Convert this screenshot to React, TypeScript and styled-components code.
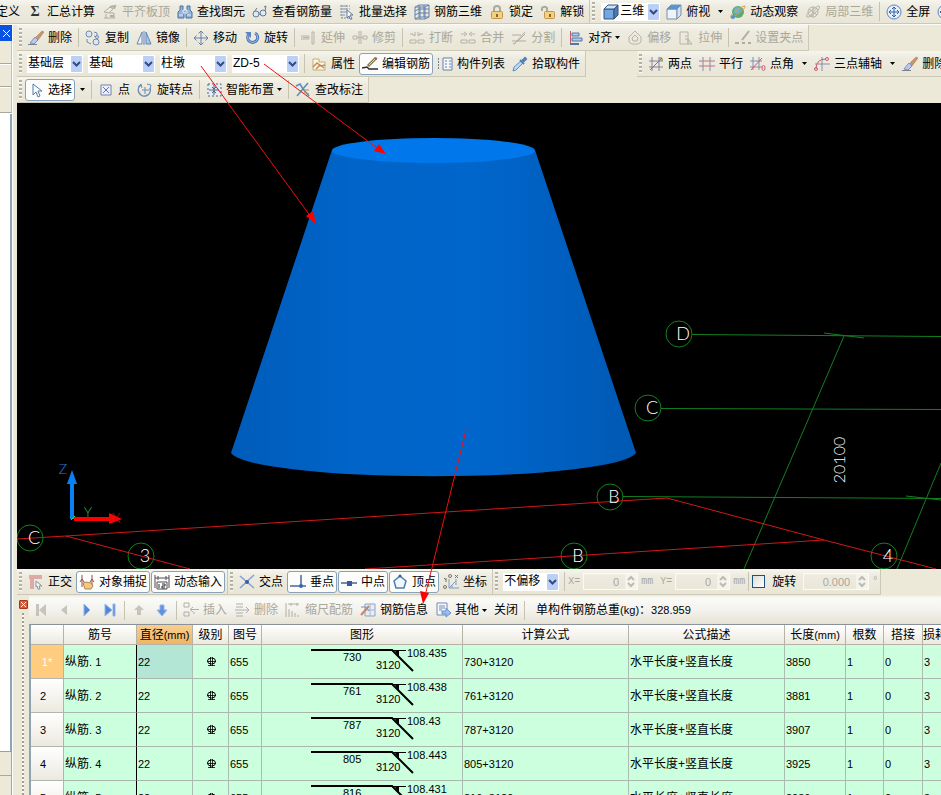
import React from "react";
import styled, { createGlobalStyle, css } from "styled-components";

const GlobalStyle = createGlobalStyle`
  * { box-sizing: border-box; }
  body { margin: 0; background: #ece9d8; overflow: hidden; }
  body, button, select, input, table {
    font-family: "Liberation Sans", "Noto Sans CJK SC", sans-serif;
    font-size: 12px;
    line-height: 16px;
    color: #000;
  }
`;

/* ---------- icons ---------- */

const I = {
  level: <g fill="none" stroke="#aaa799"><path d="M2 8l6-5 3 2-4 4zM4 10v4M2 14h11M7 9h5v5" /><path d="M8 3l5-1-1 3M8 12h4" strokeWidth="2" /></g>,
  binoc: <g fill="#86abdc" stroke="#36619c"><path d="M3 2h3v4l1 2v6H1V8l2-2zM10 2h3v4l2 2v6H9V8l1-2z" /><path d="M6 6h4v3H6zM2 11h4M10 11h4" stroke="#e1ecfa" /></g>,
  glasses: <g fill="#dce9f5" stroke="#53698a"><circle cx="4" cy="10" r="3" /><circle cx="11" cy="9" r="3" /><path d="M7 10h1M2 8l3-4M13 7l1-5-2 1" fill="none" /></g>,
  batch: <g fill="none" stroke="#6e83a8"><path d="M1 2h10M1 5h10M1 8h6M1 11h6M2 14h8M3 1v13M7 1v8" strokeDasharray="2 1" /><path d="M8 6l6 5-3 0 2 4-2 0-1-3-2 2z" fill="#fff" stroke="#506a96" /></g>,
  grid3: <g fill="none" stroke="#5273a8"><path d="M1 3l4-2v12l-4 2zM5 1h10v12H5M1 7l4-2h10M1 11l4-2h10M10 1v12M1 15h10l4-2M1 3h10l4-2M11 3v12M6 3v12" /></g>,
  lock: <g><path d="M5 8V5a3 3 0 016 0v3" fill="none" stroke="#a3a094" strokeWidth="2" /><rect x="2.5" y="7.5" width="11" height="7" rx="1" fill="#f5ce72" stroke="#be8a35" /><path d="M8 10v3" stroke="#7d5419" strokeWidth="2" /></g>,
  unlock: <g><path d="M2 7V4a3 3 0 015 0v4" fill="none" stroke="#a3a094" strokeWidth="2" /><rect x="4.5" y="7.5" width="10" height="7" rx="1" fill="#f5ce72" stroke="#be8a35" /><path d="M10 10v3" stroke="#7d5419" strokeWidth="2" /></g>,
  cube: <g stroke="#193d69" strokeLinejoin="round"><path d="M1 5h10v10H1z" fill="#5d9ddb" /><path d="M1 5l4-4h10l-4 4z" fill="#c6e1fa" /><path d="M11 5l4-4v10l-4 4z" fill="#2e6aab" /></g>,
  cubeTop: <g stroke="#6185ae" strokeLinejoin="round"><path d="M1 5h10v10H1z" fill="#eef5fc" /><path d="M1 5l4-4h10l-4 4z" fill="#428bd0" /><path d="M11 5l4-4v10l-4 4z" fill="#d2e2f2" /></g>,
  orbit: <g><circle cx="8" cy="8" r="6" fill="#46a366" /><path d="M4 5q4-4 7 0l-2 4-4 1z" fill="#55aede" /><path d="M1 14Q-1 11 7 6t8-4q1 2-6 7t-8 5z" fill="none" stroke="#dc9338" /><circle cx="3" cy="13" r="2" fill="#3a87cb" /></g>,
  orbitOff: <g fill="none" stroke="#b0ad9f"><circle cx="8" cy="8" r="5" /><path d="M4 5l8 6M5 12l7-8M2 13q-2-2 5-7t7-4q2 2-4 7t-8 4zM8 3v10" /></g>,
  zoomAll: <g fill="none" stroke="#4a78bc"><circle cx="8" cy="8" r="7" fill="#e4f0fc" /><path d="M8 3v10M3 8h10M6 5l2-2 2 2M6 11l2 2 2-2M5 6L3 8l2 2M11 6l2 2-2 2" stroke="#1d519d" /></g>,
  erase: <g><path d="M14 1l2 1-6 8-3-2z" fill="#c98a55" stroke="#8d6048" strokeWidth=".5" /><path d="M7 7l3 3-4 4-4-1z" fill="#b5c5ee" stroke="#6f83b3" /><path d="M0 14.500h9" stroke="#6d7582" /></g>,
  copy: <g fill="#d9e7f6" stroke="#617ea9"><circle cx="4" cy="4" r="3" /><circle cx="11" cy="12" r="3" /><path d="M9 2l3 1v4M12 7L9 6M2 9v3l4 2" fill="none" /><circle cx="12" cy="7" r="1.500" /></g>,
  mirror: <g stroke="#5378b3"><path d="M6 2v12H1z" fill="#eff5fc" /><path d="M10 2v12h5z" fill="#9ac3e8" /><path d="M8 1v14" /></g>,
  move: <g fill="none" stroke="#54739f"><path d="M8 1v14M1 8h14M5.500 3.500L8 1l2.500 2.500M5.500 12.500L8 15l2.500-2.500M3.500 5.500L1 8l2.500 2.500M12.500 5.500L15 8l-2.500 2.500" /></g>,
  rotate: <g><path d="M5 4a5 5 0 106-1" fill="none" stroke="#3768b4" strokeWidth="3" /><path d="M5 4a5 5 0 106-1" fill="none" stroke="#91bff0" /><path d="M1 2h6v6z" fill="#4777be" /></g>,
  extend: <g fill="none" stroke="#b0ad9f"><path d="M0 6h8v3H0zM11 2h2v12h-2z" /><path d="M2 7.500h5" /></g>,
  trim: <g fill="none" stroke="#b0ad9f"><path d="M1 6h4v3H1zM11 6h4v3h-4zM7 1v13M9 1v13M5 7.500h6" /></g>,
  brk: <g fill="none" stroke="#b0ad9f"><path d="M1 4h3M6 2v4L3 4M14 4h-4M9 2v4l3-2" /><path d="M1 10h6v3H1zM9 10h6v3H9z" /></g>,
  merge: <g fill="none" stroke="#b0ad9f"><path d="M1 4h4M4 2l3 2-3 2M15 4h-4M12 2L9 4l3 2" /><path d="M1 10h6v3H1zM9 10h6v3H9z" /></g>,
  split: <g fill="none" stroke="#a9a698"><path d="M1 5h9M1 11h14M3 14L14 2M6 12l8-8M2 14l3-1" /></g>,
  align: <g><path d="M2.500 1v14" stroke="#c24455" /><path d="M4 3h7v3H4zM4 8h10v3H4z" fill="#a6c9ef" stroke="#44659b" /><path d="M2 14h9" stroke="#44659b" strokeWidth="2" /></g>,
  offset: <g fill="none" stroke="#b0ad9f"><path d="M8 1l6 6v5l-3 2H5l-3-2V7z" /><path d="M8 5l3 3-1 3H6L5 8z" /></g>,
  stretch: <g fill="none" stroke="#b0ad9f"><path d="M2 2h8v12H2zM7 6h2M7 9h3v5h4M10 9l4 5" /></g>,
  gripPt: <g fill="none" stroke="#a9a698"><path d="M14 1l-7 9M0 13h4M7 13h3M13 13h3" strokeWidth="2" /></g>,
  props: <g><path d="M2 3h6v3h6v8H2z" fill="#fff8e3" stroke="#c2a264" /><path d="M2 11l4-4 4 3 4-1M5 13l4-4 4 3" stroke="#b9804f" fill="none" strokeWidth="1.500" /></g>,
  editBar: <g fill="none"><path d="M0 12l5-1 2 2h9" stroke="#111" strokeWidth="1.500" /><path d="M14 2L6 10" stroke="#7b6436" strokeWidth="3" /><path d="M13 3L7 9" stroke="#f2cf58" /><path d="M13 2l2 1" stroke="#b94040" strokeWidth="2" /></g>,
  list: <g fill="none" stroke="#56739f"><path d="M1 3h2M1 6h2M1 9h2M1 12h2" strokeDasharray="1 1" strokeWidth="2" /><path d="M6 2h9v12H6z" fill="#f5f9ff" /><path d="M8 5h2M12 5h2M8 8h2M12 8h2M8 11h2M12 11h2" /></g>,
  picker: <g><path d="M1 15l1-4 7-6 2 2-7 7z" fill="#b5d8f4" stroke="#4a82b7" /><path d="M8 4l4 4M10 5l3-3 1 1-3 3z" fill="#3f74b4" stroke="#3f74b4" strokeWidth="2" /></g>,
  twoPt: <g fill="none" stroke="#7d7599"><path d="M4 1v14M11 1v14M1 5h14M1 11h14" /><path d="M2 14L14 2" stroke="#657545" /><path d="M11 2l3 0v3" stroke="#657545" /></g>,
  parallel: <g fill="none" stroke="#7882a6"><path d="M4 1v14M11 1v14" /><path d="M0 5h16M0 10h16" stroke="#c75e70" /></g>,
  ptAngle: <g fill="none" stroke="#7882a6"><path d="M3 1v13M9 1v13M0 5h12M0 11h12" /><path d="M1 14L12 2" stroke="#ce4560" /><ellipse cx="13.500" cy="12" rx="1.500" ry="2.500" stroke="#ce4560" /></g>,
  threePt: <g fill="none" stroke="#7882a6"><path d="M8 1v14M1 8h15" /><path d="M2 13Q2 3 12 3" stroke="#ce4560" /><circle cx="13" cy="3" r="1.500" stroke="#ce4560" /><circle cx="2" cy="13" r="1.500" stroke="#ce4560" /></g>,
  cursor: <path d="M5 2v11l3-3 2 5 2-1-2-5h4z" fill="#f5fbff" stroke="#426c9b" />,
  point: <g fill="#edf2ff" stroke="#6570a7"><path d="M3 3h10v10H3z" /><path d="M5 5l6 6M11 5l-6 6" stroke="#5063b2" /></g>,
  rotPt: <g fill="none" stroke="#5b80b3"><path d="M4 3a6 6 0 109 3" strokeWidth="1.500" /><path d="M1 5l3-3 1 4M8 5v7M5 8h7M10 2l4 1-1 4" /></g>,
  smart: <g fill="none" stroke="#3d506f"><path d="M2 2h13v12H2z" fill="#e4edf7" strokeDasharray="2 2" /><path d="M8 3v10M3 8h10M6 5l2 2 2-2M6 11l2-2 2 2" /></g>,
  check: <g fill="none" stroke="#4780bd"><path d="M1 4l4-2 3 5 6 7M13 1L7 8l-5 6" strokeWidth="1.500" /><path d="M9 8l5 0M9 10l5 2" stroke="#a58346" /></g>,
  ortho: <g fill="none"><path d="M1 3h13M4 3v12" stroke="#dba2a0" strokeWidth="4" /><path d="M8 7l6 5-3 0 1 3-2 0-1-3-1 1z" fill="#f5f8fa" stroke="#788b98" /></g>,
  snap: <g><path d="M3 1v12M13 1v12M1 8l2-3 2 3M11 8l2-3 2 3" fill="none" stroke="#8c3732" /><path d="M4 9l3-1 5 1 2 3-2 3H6z" fill="#f0c272" stroke="#a57738" /></g>,
  dyn: <g fill="none" stroke="#3b3442"><path d="M1 1v13M15 1v13M1 4h14M4 2v4M12 2v4" /><path d="M3 8h10v7H3z" fill="#fff" /><path d="M5 10v4M8 10h3v2H8v2h3" stroke="#111" /></g>,
  inter: <g stroke="#6e98da" strokeWidth="1.500"><path d="M1 2l14 12M15 1L1 14" /><circle cx="8" cy="8" r="2" fill="#28488b" stroke="none" /></g>,
  perp: <g stroke="#32518d" strokeWidth="1.500"><path d="M0 12h16M11 1v11" /><circle cx="11" cy="12" r="2" fill="#1756ae" stroke="none" /></g>,
  mid: <g stroke="#32518d" strokeWidth="1.500"><path d="M0 9h16" /><path d="M6 7h5v5H6z" fill="#1c4594" stroke="none" /></g>,
  vertex: <g><path d="M8 2l6 5-2 7H4L2 7z" fill="#eef6ff" stroke="#376da8" strokeWidth="1.500" /><circle cx="8" cy="2" r="1.500" fill="#1e4e8b" /></g>,
  coord: <g fill="none" stroke="#6d93c4"><path d="M6 5v9h10M6 14l7-7M9 11v3M13 5v6" /><path d="M1 4l2 2M3 4v4M12 1l3 3M15 1l-3 3" stroke="#666" /><circle cx="7" cy="2" r="1.500" stroke="#666" /><circle cx="2" cy="13" r="1.500" stroke="#666" /></g>,
  first: <g fill="#c0beb5"><path d="M3 2h3v12H3zM13 2v12L6 8z" /></g>,
  prev: <path d="M11 3v10L5 8z" fill="#c0beb5" />,
  next: <path d="M5 2v12l6-6z" fill="#3e78d2" stroke="#85aff0" />,
  last: <g fill="#3e78d2" stroke="#85aff0"><path d="M3 2v12l7-6zM11 2h2v12h-2z" /></g>,
  up: <path d="M8 3l5 5h-3v5H6V8H3z" fill="#c0beb5" />,
  down: <path d="M6 3h4v5h3l-5 6-5-6h3z" fill="#4d84da" stroke="#84adf0" />,
  insert: <g fill="none" stroke="#aaa799"><path d="M1 1h5v4H1zM1 10h5v4H1zM8 7.500h8M10 5L7 7.500l3 2.500M11 10v2" /></g>,
  remove: <g fill="none" stroke="#aaa799"><path d="M2 2h7M2 5h7M2 11h7M2 14h7M1 8h14M12 5l3 3-3 3" /></g>,
  scale: <g fill="none" stroke="#aaa799"><path d="M1 1v14M3 2h11M6 1v3M12 1v3M4 7v8M7 9v6M10 11v4M13 13v2" /></g>,
  info: <g fill="none"><path d="M5 2h10v12H5z" fill="#e6edf7" stroke="#8297c0" /><path d="M10 2v12M5 8h10" stroke="#9bb0d6" /><path d="M1 13L9 4" stroke="#c07a52" strokeWidth="2" /><path d="M1 5h5l3 4" stroke="#6b84b7" /></g>,
  other: <g fill="none" stroke="#637cab"><path d="M2 1h10v12H2z" fill="#f5f8ff" /><path d="M4 4h6M4 6h6M4 8h3" /><path d="M7 9h4V6l5 5-5 4v-3H7z" fill="#8db6ee" stroke="#5b85c6" /></g>,
};
type IconName = keyof typeof I;

const Glyph = styled.svg`
  width: 16px;
  height: 16px;
  flex: none;
  opacity: 0.88;
`;
const Icon = ({ name }: { name: IconName }) => (
  <Glyph viewBox="0 0 16 16" aria-hidden="true">{I[name]}</Glyph>
);

/* ---------- frame ---------- */

const Page = styled.div`
  position: relative;
  display: flex;
  flex-direction: column;
  height: 100vh;
  overflow: hidden;
  white-space: nowrap;
  background: #ece9d8;
`;

const Body = styled.div`
  display: flex;
  flex: 1;
  min-height: 0;
`;

const Main = styled.main`
  display: flex;
  flex-direction: column;
  flex: 1;
  min-width: 0;
`;

const BarLine = styled.div<{ $top?: boolean }>`
  display: flex;
  flex: none;
  height: 26px;
  overflow: hidden;
  ${(p) => p.$top && css`height: 25px; border-bottom: 1px solid #fbfaf4;`}
`;

const Bar = styled.div<{ $flush?: boolean; $gapBefore?: boolean; $fill?: boolean }>`
  display: flex;
  flex: ${(p) => (p.$fill ? "1 0 auto" : "none")};
  align-items: center;
  gap: 1px;
  padding: 0 2px;
  border-bottom: 1px solid #cbc8b5;
  border-right: 1px solid #cbc8b5;
  background: linear-gradient(#f6f5ed, #edebdf 30%, #e9e6d7);
  ${(p) => p.$flush && css`margin-left: -9px;`}
  ${(p) => p.$gapBefore && css`margin-left: 51px;`}
`;

const Grip = styled.span`
  flex: none;
  width: 3px;
  height: 20px;
  margin-right: 2px;
  background: repeating-linear-gradient(#b5b2a1 0 2px, #fbfaf5 2px 3px, transparent 3px 4px);
`;

const Sep = styled.span`
  flex: none;
  width: 1px;
  height: 19px;
  margin: 0 2px;
  background: #c5c2b0;
`;

const ToolButton = styled.button<{ $boxed?: boolean }>`
  display: flex;
  flex: none;
  align-items: center;
  height: 22px;
  padding: 0 2px;
  border: 1px solid transparent;
  border-radius: 3px;
  background: none;
  ${(p) => p.$boxed && css`border-color: #8aa2b8; background: #fcfcfa;`}
  &:disabled { color: #aaa799; }
  > svg + span { margin-left: 4px; }
  > span + svg { margin-left: 3px; }
`;

const IconButton = styled.button`
  display: grid;
  place-items: center;
  flex: none;
  width: 22px;
  height: 22px;
  padding: 0;
  border: 0;
  background: none;
`;

const CaretButton = styled(IconButton)`
  width: 12px;
`;

const CaretGlyph = styled.svg`
  width: 5px;
  height: 3px;
  flex: none;
`;
const Caret = () => <CaretGlyph viewBox="0 0 5 3" aria-hidden="true"><path d="M0 0h5L2.500 3z" /></CaretGlyph>;

const Sigma = styled.b`
  width: 16px;
  margin-right: 4px;
  text-align: center;
  font-family: "Liberation Serif", serif;
  font-size: 14px;
  color: #333;
`;

type ToolProps = { icon?: IconName; label: string; off?: boolean; boxed?: boolean; menu?: "inline" | "split" };
const Tool = ({ icon, label, off, boxed, menu }: ToolProps) => (
  <>
    <ToolButton type="button" disabled={off} $boxed={boxed}>
      {icon && <Icon name={icon} />}
      <span>{label}</span>
      {menu === "inline" && <Caret />}
    </ToolButton>
    {menu === "split" && <CaretButton type="button" aria-label={`${label} 菜单`}><Caret /></CaretButton>}
  </>
);

/* ---------- drop-downs ---------- */

const Combos = styled.div`
  display: flex;
  gap: 5px;
  padding: 0 2px;
`;

const ComboBox = styled.span<{ $wide?: boolean }>`
  display: flex;
  align-items: center;
  width: ${(p) => (p.$wide ? 67 : 56)}px;
  height: 18px;
  padding-right: 1px;
  background: #fff;
`;

const ViewCombo = styled(ComboBox)`
  width: 59px;
  margin: 0 2px 0 3px;
  padding-left: 2px;
`;

const Select = styled.select`
  appearance: none;
  flex: 1;
  min-width: 0;
  height: 18px;
  padding: 0 0 2px 1px;
  border: 0;
  background: none;
`;

const DropGlyph = styled.svg`
  flex: none;
  width: 11px;
  height: 16px;
  pointer-events: none;
`;
const Drop = () => (
  <DropGlyph viewBox="0 0 11 16" aria-hidden="true">
    <rect width="11" height="16" rx="1" fill="#bccff7" />
    <path d="M2 6l3.500 3.500L9 6" fill="none" stroke="#304c82" strokeWidth="2" />
  </DropGlyph>
);
const Combo = ({ label, value, wide }: { label: string; value: string; wide?: boolean }) => (
  <ComboBox $wide={wide}>
    <Select aria-label={label} defaultValue={value}><option>{value}</option></Select>
    <Drop />
  </ComboBox>
);

/* ---------- left dock ---------- */

const Dock = styled.aside`
  display: flex;
  flex-direction: column;
  flex: none;
  width: 13px;
  margin-right: 4px;
  border-right: 1px solid #fff;
`;
const DockClose = styled.button`
  display: grid;
  place-items: center;
  height: 16px;
  padding: 0;
  border: 0;
  background: #0a53e0;
`;
const DockRow = styled.div<{ $last?: boolean }>`
  height: ${(p) => (p.$last ? 26 : 23)}px;
  border-bottom: 1px solid #aaa799;
  border-right: 1px solid #c5c2b0;
  box-shadow: 0 1px #fff;
`;
const DockTree = styled.div`
  flex: 1;
  margin-top: 1px;
  border-right: 2px solid #8fa3b5;
  border-bottom: 1px solid #8fa3b5;
  background: #fff;
`;
const DockFoot = styled.div`
  height: 43px;
  padding-top: 23px;
  border-right: 1px solid #aaa799;
`;
const DockRule = styled.div`
  border-top: 1px solid #aaa799;
`;

/* ---------- 3D view ---------- */

const View = styled.div`
  flex: 1;
  min-height: 0;
  background: #000;
`;
const Scene = styled.svg`
  display: block;
  width: 100%;
  height: 100%;
  text { font-family: Lato, "Liberation Sans", sans-serif; font-weight: 300; text-anchor: middle; }
`;
const Annotation = styled.svg`
  position: absolute;
  inset: 0;
  width: 100%;
  height: 100%;
  pointer-events: none;
`;

const axes = [
  { x: 679, y: 334, t: "D" },
  { x: 648, y: 408, t: "C" },
  { x: 610, y: 497, t: "B" },
  { x: 30, y: 538, t: "C" },
  { x: 141, y: 556, t: "3" },
  { x: 574, y: 556, t: "B" },
  { x: 884, y: 556, t: "4" },
];

const Viewport = () => (
  <View>
    <Scene viewBox="17 103 924 466" preserveAspectRatio="xMidYMid slice" role="img" aria-label="柱墩三维视图">
      <defs>
        <linearGradient id="side">
          <stop offset="0" stopColor="#005cba" />
          <stop offset=".3" stopColor="#0064c8" />
          <stop offset=".6" stopColor="#0066cc" />
          <stop offset="1" stopColor="#0059b4" />
        </linearGradient>
      </defs>
      <path d="M332 150L231 453A203 25 0 0 0 636 453L535 150z" fill="url(#side)" />
      <ellipse cx="433.500" cy="150.500" rx="101.500" ry="12.500" fill="#0077ea" />
      <g fill="none" stroke="#128020">
        <path d="M692 334.500L941 336.500M661 408.500L941 409.500M623 496.500L941 498.500" />
        <path d="M824 333L864 338M906 496L941 500M844 336L744 569M941 463L897 569" />
        {axes.map((a, i) => <circle key={i} cx={a.x} cy={a.y} r="13" />)}
      </g>
      <path d="M17 539L66 536L667 498L824 540L936 569M66 536L190 569M365 569L824 540" fill="none" stroke="#d01818" />
      <g fill="#fff" fontSize="18">
        {axes.map((a, i) => <text key={i} x={a.x + 4} y={a.y + 6}>{a.t}</text>)}
        <text fontSize="16" transform="translate(845 460) rotate(-90)">20100</text>
      </g>
      <path d="M70 519V484H67L72 470L77 484H74V519z" fill="#0a80f5" />
      <path d="M74 517H109V513L122 519L109 524V521H74z" fill="#f00" />
      <path d="M71 520l4-4" stroke="#2ed060" />
      <text x="63" y="474" fontSize="14" fill="#2a7be0">Z</text>
      <text x="88" y="517" fontSize="14" fill="#28b04c">Y</text>
      <text x="116" y="523" fontSize="14" fill="#c81010">X</text>
    </Scene>
  </View>
);

/* ---------- status fields ---------- */

const Field = styled.label<{ $spaced?: boolean }>`
  display: flex;
  align-items: center;
  color: #aaa799;
  font-family: "Liberation Mono", monospace;
  font-size: 10px;
  margin-left: ${(p) => (p.$spaced ? 6 : 0)}px;
`;
const Spin = styled.span<{ $wide?: boolean }>`
  display: flex;
  align-items: center;
  width: ${(p) => (p.$wide ? 66 : 55)}px;
  height: 17px;
  margin: 0 3px;
  border: 1px solid #fbfaf5;
`;
const SpinInput = styled.input`
  flex: 1;
  min-width: 0;
  padding: 0 6px 0 0;
  border: 0;
  background: none;
  text-align: right;
  font-size: 11px;
  &:disabled { color: #aaa799; }
`;
const SpinGlyph = styled.svg`
  flex: none;
  width: 12px;
  height: 15px;
  background: #f4f3ec;
`;
const Spinner = ({ label, value, wide }: { label: string; value: string; wide?: boolean }) => (
  <Spin $wide={wide}>
    <SpinInput aria-label={label} defaultValue={value} disabled />
    <SpinGlyph viewBox="0 0 12 15" aria-hidden="true">
      <path d="M3 6l3-3 3 3M3 9l3 3 3-3" fill="none" stroke="#bdbbb0" strokeWidth="2" />
    </SpinGlyph>
  </Spin>
);
const CheckLabel = styled.label`
  display: flex;
  align-items: center;
  gap: 7px;
  margin-right: 3px;
`;
const CheckBox = styled.input`
  appearance: none;
  width: 13px;
  height: 13px;
  margin: 0;
  border: 1px solid #1c5180;
  background: linear-gradient(135deg, #dcdcd7, #fff);
`;

/* ---------- rebar panel ---------- */

const Rebar = styled.section`
  display: flex;
  flex: none;
  height: 200px;
  overflow: hidden;
`;
const RebarEdge = styled.div`
  display: flex;
  flex-direction: column;
  align-items: center;
  flex: none;
  width: 12px;
  padding-top: 5px;
`;
const RebarClose = styled.button`
  display: grid;
  place-items: center;
  width: 9px;
  height: 9px;
  padding: 0;
  border: 1px solid #a33a22;
  border-radius: 1px;
  background: #d65a3c;
`;
const EdgeGrip = styled.div`
  flex: 1;
  width: 2px;
  margin-top: 4px;
  background: repeating-linear-gradient(#a09d8c 0 2px, #fbfaf5 2px 4px);
`;
const RebarBody = styled.div`
  flex: 1;
  min-width: 0;
`;
const RebarBar = styled.div`
  display: flex;
  align-items: center;
  gap: 1px;
  height: 29px;
  padding: 1px 0 0 1px;
  background: linear-gradient(#ece9d8, #fafaf7 10%, #f4f3ee 50%, #e6e3d5);
`;
const Total = styled.output`
  padding-left: 8px;
`;
const Latin = styled.span`
  font-size: 11px;
`;
const Table = styled.table`
  table-layout: fixed;
  width: 954px;
  border-collapse: separate;
  border-spacing: 0;
  border-top: 1px solid #8a9199;
  border-left: 2px solid #8fa3b5;
`;
const Th = styled.th<{ $on?: boolean }>`
  height: 20px;
  padding: 0;
  overflow: hidden;
  border-right: 1px solid #b5b2a6;
  border-bottom: 1px solid #b5b2a6;
  font-weight: 400;
  background: ${(p) => (p.$on ? "linear-gradient(#f8cf92, #efb562)" : "linear-gradient(#fff, #ece9df)")};
`;
const RowHead = styled.th<{ $on?: boolean }>`
  height: 34px;
  padding: 0 8px 0 0;
  border-right: 1px solid #b0b5ae;
  border-bottom: 1px solid #b0b5ae;
  font-size: 11px;
  font-weight: 400;
  color: ${(p) => (p.$on ? "#fff" : "#000")};
  background: ${(p) => (p.$on ? "#ffcc80" : "linear-gradient(#fff, #ece9df)")};
  ${(p) => p.$on && css`padding: 0;`}
`;
const Td = styled.td<{ $on?: boolean; $dark?: boolean; $mid?: boolean; $num?: boolean }>`
  height: 34px;
  padding: 0 0 0 1px;
  overflow: hidden;
  border-right: 1px solid ${(p) => (p.$dark ? "#000" : "#a9bdb0")};
  border-bottom: 1px solid #a9b8ad;
  background: ${(p) => (p.$on ? "#b3e6d5" : "#ccffdd")};
  text-align: ${(p) => (p.$mid ? "center" : "left")};
  font-size: ${(p) => (p.$num ? 11 : 12)}px;
`;
const ShapeDrawing = styled.svg`
  display: block;
  width: 199px;
  height: 33px;
  font-size: 11px;
`;
const GradeGlyph = styled.svg`
  display: inline-block;
  width: 11px;
  height: 12px;
  vertical-align: middle;
`;

const columns = [33, 73, 56, 36, 33, 201, 166, 156, 61, 38, 39, 60];
const rows = [
  { n: "1*", a: "730", angle: "108.435", len: "3850" },
  { n: "2", a: "761", angle: "108.438", len: "3881" },
  { n: "3", a: "787", angle: "108.43", len: "3907" },
  { n: "4", a: "805", angle: "108.443", len: "3925" },
  { n: "5", a: "816", angle: "108.431", len: "3936" },
];

const BarShape = ({ a, angle }: { a: string; angle: string }) => (
  <ShapeDrawing viewBox="0 0 199 33" role="img" aria-label={`${a} / 3120 / ${angle}`}>
    <path d="M48 5H129L150 26" fill="none" stroke="#000" strokeWidth="2" />
    <path d="M129 5.500H143M135.500 6v6" stroke="#000" />
    <path d="M132 6h4l-1 5z" />
    <text x="80" y="16">{a}</text>
    <text x="113" y="24">3120</text>
    <text x="144" y="12">{angle}</text>
  </ShapeDrawing>
);

const Grade = () => (
  <GradeGlyph viewBox="0 0 11 12" role="img" aria-label="HRB335">
    <ellipse cx="5.500" cy="5" rx="4" ry="3" fill="none" stroke="#000" />
    <path d="M4.500 1v9M6.500 1v9M2 9.500h7M1 5.500h9" stroke="#000" strokeWidth=".8" />
  </GradeGlyph>
);

const Mm = () => <Latin>(mm)</Latin>;

export default function App() {
  return (
    <Page>
      <GlobalStyle />
      <BarLine $top>
        <Bar $flush>
          <Tool label="定义" />
          <ToolButton type="button"><Sigma>Σ</Sigma><span>汇总计算</span></ToolButton>
          <Tool icon="level" label="平齐板顶" off />
          <Tool icon="binoc" label="查找图元" />
          <Tool icon="glasses" label="查看钢筋量" />
          <Tool icon="batch" label="批量选择" />
          <Tool icon="grid3" label="钢筋三维" />
          <Tool icon="lock" label="锁定" />
          <Tool icon="unlock" label="解锁" />
        </Bar>
        <Bar $fill>
          <Grip />
          <ViewCombo>
            <Icon name="cube" />
            <Select aria-label="视图" defaultValue="三维"><option>三维</option></Select>
            <Drop />
          </ViewCombo>
          <Tool icon="cubeTop" label="俯视" menu="split" />
          <Tool icon="orbit" label="动态观察" />
          <Tool icon="orbitOff" label="局部三维" off />
          <Sep />
          <Tool icon="zoomAll" label="全屏" />
          <IconButton type="button" aria-label="缩放"><Icon name="zoomAll" /></IconButton>
        </Bar>
      </BarLine>
      <Body>
        <Dock>
          <DockClose type="button" aria-label="关闭面板">
            <svg width="9" height="9" viewBox="0 0 9 9"><path d="M1 1l7 7M8 1L1 8" stroke="#fff" /></svg>
          </DockClose>
          <DockRow />
          <DockRow />
          <DockRow $last />
          <DockTree />
          <DockFoot><DockRule /></DockFoot>
        </Dock>
        <Main>
          <BarLine>
            <Bar>
              <Grip />
              <Tool icon="erase" label="删除" />
              <Sep />
              <Tool icon="copy" label="复制" />
              <Tool icon="mirror" label="镜像" />
              <Sep />
              <Tool icon="move" label="移动" />
              <Tool icon="rotate" label="旋转" />
              <Sep />
              <Tool icon="extend" label="延伸" off />
              <Tool icon="trim" label="修剪" off />
              <Sep />
              <Tool icon="brk" label="打断" off />
              <Tool icon="merge" label="合并" off />
              <Tool icon="split" label="分割" off />
              <Sep />
              <Tool icon="align" label="对齐" menu="inline" />
              <Tool icon="offset" label="偏移" off />
              <Tool icon="stretch" label="拉伸" off />
              <Sep />
              <Tool icon="gripPt" label="设置夹点" off />
            </Bar>
          </BarLine>
          <BarLine>
            <Bar>
              <Grip />
              <Combos>
                <Combo label="楼层" value="基础层" />
                <Combo label="构件类别" value="基础" wide />
                <Combo label="构件类型" value="柱墩" wide />
                <Combo label="构件" value="ZD-5" wide />
              </Combos>
              <Sep />
              <Tool icon="props" label="属性" />
              <Tool icon="editBar" label="编辑钢筋" boxed />
              <Tool icon="list" label="构件列表" />
              <Tool icon="picker" label="拾取构件" />
            </Bar>
            <Bar $gapBefore $fill>
              <Grip />
              <Tool icon="twoPt" label="两点" />
              <Tool icon="parallel" label="平行" />
              <Tool icon="ptAngle" label="点角" menu="split" />
              <Tool icon="threePt" label="三点辅轴" menu="split" />
              <Tool icon="erase" label="删除" />
            </Bar>
          </BarLine>
          <BarLine>
            <Bar>
              <Grip />
              <Tool icon="cursor" label="选择" boxed menu="split" />
              <Sep />
              <Tool icon="point" label="点" />
              <Tool icon="rotPt" label="旋转点" />
              <Sep />
              <Tool icon="smart" label="智能布置" menu="inline" />
              <Sep />
              <Tool icon="check" label="查改标注" />
            </Bar>
          </BarLine>
          <Viewport />
          <BarLine>
            <Bar>
              <Grip />
              <Tool icon="ortho" label="正交" />
              <Tool icon="snap" label="对象捕捉" boxed />
              <Tool icon="dyn" label="动态输入" boxed />
            </Bar>
            <Bar>
              <Grip />
              <Tool icon="inter" label="交点" />
              <Tool icon="perp" label="垂点" boxed />
              <Tool icon="mid" label="中点" boxed />
              <Tool icon="vertex" label="顶点" boxed />
              <Tool icon="coord" label="坐标" />
            </Bar>
            <Bar>
              <Grip />
              <Combos><Combo label="偏移方式" value="不偏移" /></Combos>
              <Sep />
              <Field>X=<Spinner label="X" value="0" />mm</Field>
              <Field $spaced>Y=<Spinner label="Y" value="0" />mm</Field>
              <Sep />
              <CheckLabel><CheckBox type="checkbox" />旋转</CheckLabel>
              <Field><Spinner label="旋转角度" value="0.000" wide />°</Field>
            </Bar>
          </BarLine>
          <Rebar>
            <RebarEdge>
              <RebarClose type="button" aria-label="关闭钢筋面板">
                <svg width="5" height="5" viewBox="0 0 5 5"><path d="M0 0l5 5M5 0L0 5" stroke="#fff" /></svg>
              </RebarClose>
              <EdgeGrip />
            </RebarEdge>
            <RebarBody>
              <RebarBar>
                <IconButton type="button" aria-label="首行" disabled><Icon name="first" /></IconButton>
                <IconButton type="button" aria-label="上一行" disabled><Icon name="prev" /></IconButton>
                <IconButton type="button" aria-label="下一行"><Icon name="next" /></IconButton>
                <IconButton type="button" aria-label="末行"><Icon name="last" /></IconButton>
                <Sep />
                <IconButton type="button" aria-label="上移" disabled><Icon name="up" /></IconButton>
                <IconButton type="button" aria-label="下移"><Icon name="down" /></IconButton>
                <Sep />
                <Tool icon="insert" label="插入" off />
                <Tool icon="remove" label="删除" off />
                <Tool icon="scale" label="缩尺配筋" off />
                <Tool icon="info" label="钢筋信息" />
                <Tool icon="other" label="其他" menu="inline" />
                <Tool label="关闭" />
                <Sep />
                <Total>单构件钢筋总重<Latin>(kg)</Latin>：<Latin>328.959</Latin></Total>
              </RebarBar>
              <Table>
                <colgroup>{columns.map((w, i) => <col key={i} width={w} />)}</colgroup>
                <thead>
                  <tr>
                    <Th aria-label="行号" />
                    <Th>筋号</Th>
                    <Th $on>直径<Mm /></Th>
                    <Th>级别</Th>
                    <Th>图号</Th>
                    <Th>图形</Th>
                    <Th>计算公式</Th>
                    <Th>公式描述</Th>
                    <Th>长度<Mm /></Th>
                    <Th>根数</Th>
                    <Th>搭接</Th>
                    <Th align="left">损耗</Th>
                  </tr>
                </thead>
                <tbody>
                  {rows.map((r, i) => (
                    <tr key={r.n}>
                      <RowHead $on={i === 0}>{r.n}</RowHead>
                      <Td $dark>纵筋<Latin>. {i + 1}</Latin></Td>
                      <Td $num $on={i === 0}>22</Td>
                      <Td $mid><Grade /></Td>
                      <Td $num>655</Td>
                      <Td><BarShape a={r.a} angle={r.angle} /></Td>
                      <Td $num>{r.a}+3120</Td>
                      <Td>水平长度+竖直长度</Td>
                      <Td $num>{r.len}</Td>
                      <Td $num>1</Td>
                      <Td $num>0</Td>
                      <Td $num>3</Td>
                    </tr>
                  ))}
                </tbody>
              </Table>
            </RebarBody>
          </Rebar>
        </Main>
      </Body>
      <Annotation aria-hidden="true">
        <g stroke="#f01010" fill="none">
          <path d="M201 66L311 217M264 64L377 148M466 430L426 592" />
        </g>
        <g fill="#f00">
          <path d="M316 224L306 216L313 211z" />
          <path d="M386 154L374 151L379 144z" />
          <path d="M423 604L420 591L429 593z" />
        </g>
      </Annotation>
    </Page>
  );
}
